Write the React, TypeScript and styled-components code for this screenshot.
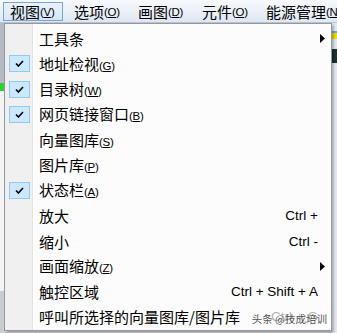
import React from "react";
import styled, { createGlobalStyle } from "styled-components";

const GlobalStyle = createGlobalStyle`
  html, body {
    margin: 0;
    padding: 0;
    width: 337px;
    height: 333px;
    overflow: hidden;
    background: #d4d8de;
  }
`;

const Page = styled.div`
  display: flex;
  flex-direction: column;
  width: 337px;
  height: 333px;
  overflow: hidden;
  font-family: "Noto Sans CJK SC", "Liberation Sans", sans-serif;
`;

// ===================================
const MenuBar = styled.div`
  display: flex;
  gap: 4px;
  height: 23px;
  padding: 0 0 0 3px;
  box-sizing: border-box;
  background: linear-gradient(180deg, #f7f9fc 0%, #e9eff7 60%, #dde6f2 100%);
  border-bottom: 1px solid #b9c3cf;
  flex-shrink: 0;
`;

const BarItem = styled.div<{ $active?: boolean }>`
  display: flex;
  align-items: center;
  width: 60px;
  height: 19px;
  margin-top: 2px;
  padding-left: 6px;
  box-sizing: border-box;
  font-size: 15px;
  color: #000;
  white-space: nowrap;
  border: 1px solid ${(p) => (p.$active ? "#7aa3d4" : "transparent")};
  background: ${(p) =>
    p.$active ? "linear-gradient(180deg, #eaf2fb 0%, #d6e6f8 100%)" : "none"};
`;

// ===================================
const Body = styled.div`
  display: flex;
  flex: 1;
  min-height: 0;
`;

const LeftStrip = styled.div`
  display: flex;
  flex-direction: column;
  width: 4px;
  background: #c9ccd1;
`;

const RightStrip = styled.div`
  display: flex;
  flex-direction: column;
  gap: 0;
  width: 5px;
  background: #e4e8ee;
`;

const StripBit = styled.div<{ $c: string; $h: number }>`
  height: ${(p) => p.$h}px;
  background: ${(p) => p.$c};
  flex-shrink: 0;
`;

const Menu = styled.div`
  position: relative;
  width: 328px;
  height: 308px;
  padding-top: 2px;
  box-sizing: border-box;
  border: 1px solid #979797;
  background: linear-gradient(
    90deg,
    #f0f0f0 0px,
    #f0f0f0 27px,
    #e2e3e3 27px,
    #e2e3e3 28px,
    #ffffff 28px,
    #ffffff 29px,
    #fcfcfc 29px
  );
  box-shadow: 2px 2px 2px rgba(0, 0, 0, 0.25);
`;

const Row = styled.div`
  display: grid;
  grid-template-columns: 28px 1fr auto 13px;
  align-items: center;
  height: 25.3px;
`;

const CheckBox = styled.div`
  display: flex;
  align-items: center;
  justify-content: center;
  width: 21px;
  height: 17px;
  margin-left: 4px;
  box-sizing: border-box;
  border: 1px solid #90c8f6;
  background: #cce8ff;
`;

const Label = styled.div`
  padding-left: 6px;
  font-size: 15px;
  color: #000;
  white-space: nowrap;
  line-height: 1;
`;

const Accel = styled.span`
  font-family: "Liberation Sans", Arial, sans-serif;
  font-size: 11.5px;
  letter-spacing: -0.3px;
`;

const Key = styled.span`
  text-decoration: underline;
`;

const Shortcut = styled.div`
  font-family: "Liberation Sans", Arial, sans-serif;
  font-size: 13.5px;
  color: #000;
  white-space: nowrap;
`;

const ArrowCell = styled.div`
  display: flex;
  align-items: center;
  padding-left: 2px;
`;

const Watermark = styled.div`
  position: absolute;
  right: 2px;
  bottom: 4px;
  padding: 0 2px;
  font-size: 10.5px;
  color: #555;
  background: rgba(252, 252, 252, 0.7);
  white-space: nowrap;
`;

type Item = {
  text: string;
  key?: string;
  checked?: boolean;
  shortcut?: string;
  sub?: boolean;
};

const items: Item[] = [
  { text: "工具条", sub: true },
  { text: "地址检视", key: "G", checked: true },
  { text: "目录树", key: "W", checked: true },
  { text: "网页链接窗口", key: "B", checked: true },
  { text: "向量图库", key: "S" },
  { text: "图片库", key: "P" },
  { text: "状态栏", key: "A", checked: true },
  { text: "放大", shortcut: "Ctrl +" },
  { text: "缩小", shortcut: "Ctrl -" },
  { text: "画面缩放", key: "Z", sub: true },
  { text: "触控区域", shortcut: "Ctrl + Shift + A" },
  { text: "呼叫所选择的向量图库/图片库", shortcut: "Ctrl + G" },
];

const Check = () => (
  <svg width="9" height="7" viewBox="0 0 9 7">
    <path d="M1 3.5 L3.4 6 L8 1" fill="none" stroke="#000" strokeWidth="1.6" />
  </svg>
);

const Arrow = () => (
  <svg width="5" height="9" viewBox="0 0 5 9">
    <path d="M0 0 L5 4.5 L0 9 Z" fill="#000" />
  </svg>
);

const AccelText = ({ k }: { k: string }) => (
  <Accel>
    (<Key>{k}</Key>)
  </Accel>
);

export default function App() {
  return (
    <Page>
      <GlobalStyle />
      <MenuBar>
        <BarItem $active>
          视图<AccelText k="V" />
        </BarItem>
        <BarItem>
          选项<AccelText k="O" />
        </BarItem>
        <BarItem>
          画图<AccelText k="D" />
        </BarItem>
        <BarItem>
          元件<AccelText k="O" />
        </BarItem>
        <BarItem>
          能源管理<AccelText k="N" />
        </BarItem>
      </MenuBar>
      <Body>
        <LeftStrip>
          <StripBit $c="#b7bcc4" $h={60} />
          <StripBit $c="#2fd12f" $h={8} />
          <StripBit $c="#f4f4f4" $h={200} />
        </LeftStrip>
        <Menu>
          {items.map((it) => (
            <Row key={it.text}>
              <div>
                {it.checked && (
                  <CheckBox>
                    <Check />
                  </CheckBox>
                )}
              </div>
              <Label>
                {it.text}
                {it.key && <AccelText k={it.key} />}
              </Label>
              <Shortcut>{it.shortcut}</Shortcut>
              <ArrowCell>{it.sub && <Arrow />}</ArrowCell>
            </Row>
          ))}
          <Watermark>头条 @技成培训</Watermark>
        </Menu>
        <RightStrip>
          <StripBit $c="#e4e8ee" $h={8} />
          <StripBit $c="#6fa3dc" $h={2} />
          <StripBit $c="#e8e000" $h={6} />
          <StripBit $c="#e4e8ee" $h={10} />
          <StripBit $c="#203030" $h={14} />
          <StripBit $c="#e4e8ee" $h={200} />
        </RightStrip>
      </Body>
    </Page>
  );
}
